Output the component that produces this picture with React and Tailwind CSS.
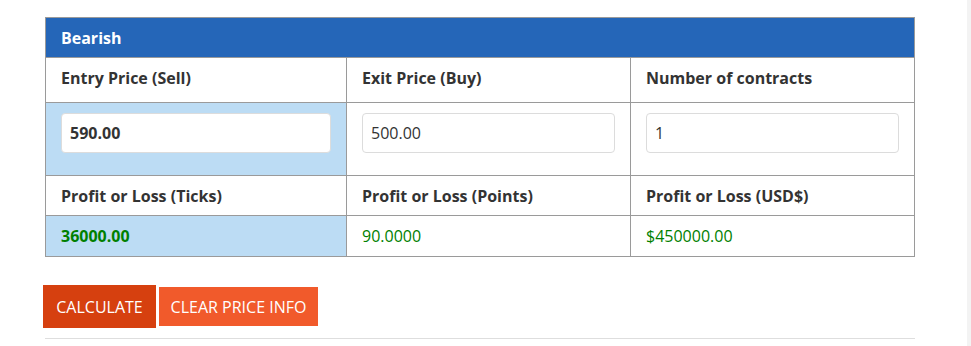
export default function App() {
  const cell = "border border-[#9a9a9a] px-[15px] text-left align-middle";
  const inputCls =
    "block w-full h-[40px] rounded-[4px] border border-[#dcdcdc] bg-white px-[8px] text-[16px] text-[#333] outline-none";
  return (
    <div
      className="relative h-[346px] w-[971px] bg-white overflow-hidden"
      style={{ fontFamily: '"Open Sans", sans-serif' }}
    >
      <div className="absolute right-0 top-0 h-full w-[4px] bg-[#f3f3f3]" />
      <div className="pl-[45px] pt-[17px] w-[915px]">
        <table className="w-[869px] border-collapse table-fixed text-[16px] text-[#333]">
          <colgroup>
            <col className="w-[301px]" />
            <col className="w-[284px]" />
            <col className="w-[284px]" />
          </colgroup>
          <tbody>
            <tr className="h-[40px]">
              <th
                colSpan={3}
                className="border border-[#9a9a9a] bg-[#2566b8] px-[15px] text-left font-bold text-white"
              >
                Bearish
              </th>
            </tr>
            <tr className="h-[45px]">
              <th className={cell + " font-bold pb-[4px]"}>Entry Price (Sell)</th>
              <th className={cell + " font-bold pb-[4px]"}>Exit Price (Buy)</th>
              <th className={cell + " font-bold pb-[4px]"}>Number of contracts</th>
            </tr>
            <tr className="h-[73px]">
              <td className={cell + " bg-[#bcdcf4] align-top pt-[10px]"}>
                <input className={inputCls + " font-bold"} defaultValue="590.00" />
              </td>
              <td className={cell + " align-top pt-[10px]"}>
                <input className={inputCls} defaultValue="500.00" />
              </td>
              <td className={cell + " align-top pt-[10px]"}>
                <input className={inputCls} defaultValue="1" />
              </td>
            </tr>
            <tr className="h-[40px]">
              <th className={cell + " font-bold"}>Profit or Loss (Ticks)</th>
              <th className={cell + " font-bold"}>Profit or Loss (Points)</th>
              <th className={cell + " font-bold"}>Profit or Loss (USD$)</th>
            </tr>
            <tr className="h-[41px]">
              <td className={cell + " bg-[#bcdcf4] font-bold text-[#008000]"}>36000.00</td>
              <td className={cell + " text-[#008000]"}>90.0000</td>
              <td className={cell + " text-[#008000]"}>$450000.00</td>
            </tr>
          </tbody>
        </table>
        <div className="mt-[28px] flex items-center -ml-[2px] gap-[3px]">
          <button className="h-[43px] w-[113px] bg-[#d6400f] text-[16px] text-white">
            CALCULATE
          </button>
          <button className="h-[39px] w-[159px] bg-[#f15a2b] text-[16px] text-white">
            CLEAR PRICE INFO
          </button>
        </div>
        <div className="mt-[10px] h-[1px] w-[870px] bg-[#dedede]" />
      </div>
    </div>
  );
}
